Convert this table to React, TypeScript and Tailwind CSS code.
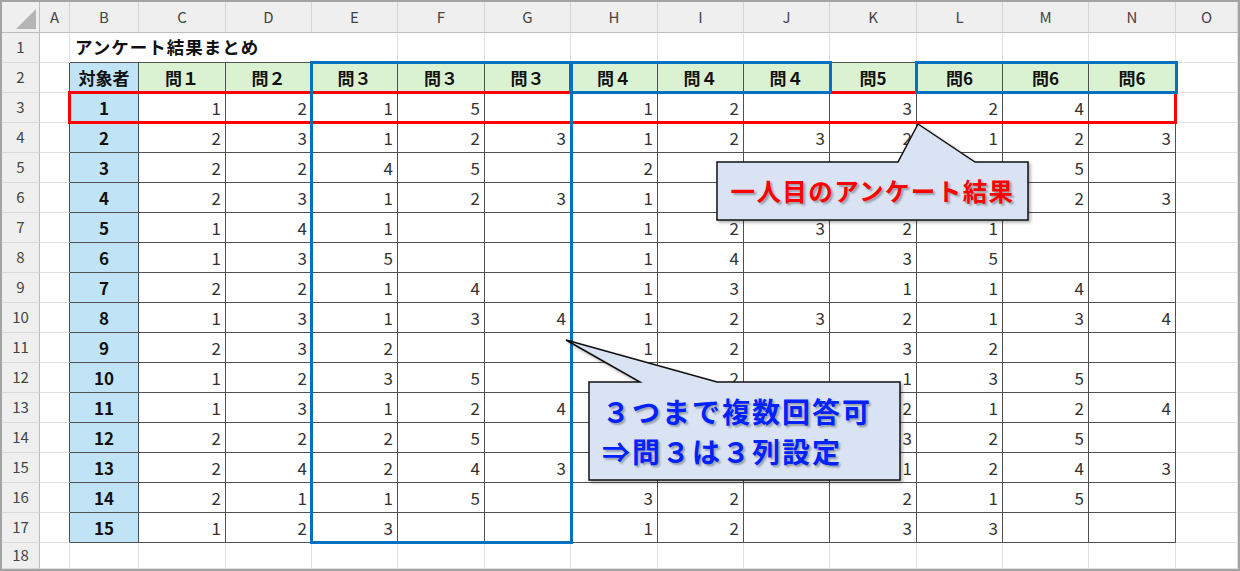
import React from "react";

// ==============================
// Sheet layout
// ==============================
const COLS = ["", "A", "B", "C", "D", "E", "F", "G", "H", "I", "J", "K", "L", "M", "N", "O"];

const HEADERS = ["問１", "問２", "問３", "問３", "問３", "問４", "問４", "問４", "問5", "問6", "問6", "問6"];

// C..N per respondent (null = blank, or hidden under a callout)
const DATA: (number | null)[][] = [
  [1, 2, 1, 5, null, 1, 2, null, 3, 2, 4, null],
  [2, 3, 1, 2, 3, 1, 2, 3, 2, 1, 2, 3],
  [2, 2, 4, 5, null, 2, null, null, null, null, 5, null],
  [2, 3, 1, 2, 3, 1, null, null, null, null, 2, 3],
  [1, 4, 1, null, null, 1, 2, 3, 2, 1, null, null],
  [1, 3, 5, null, null, 1, 4, null, 3, 5, null, null],
  [2, 2, 1, 4, null, 1, 3, null, 1, 1, 4, null],
  [1, 3, 1, 3, 4, 1, 2, 3, 2, 1, 3, 4],
  [2, 3, 2, null, null, 1, 2, null, 3, 2, null, null],
  [1, 2, 3, 5, null, null, 2, null, 1, 3, 5, null],
  [1, 3, 1, 2, 4, null, null, null, 2, 1, 2, 4],
  [2, 2, 2, 5, null, null, null, null, 3, 2, 5, null],
  [2, 4, 2, 4, 3, null, null, null, 1, 2, 4, 3],
  [2, 1, 1, 5, null, 3, 2, null, 2, 1, 5, null],
  [1, 2, 3, null, null, 1, 2, null, 3, 3, null, null],
];

const inTable = (r: number, c: number) => r >= 2 && r <= 17 && c >= 2 && c <= 14;

const font = "font-['Noto_Sans_CJK_JP','Noto_Sans',sans-serif]";

function Cell({ r, c }: { r: number; c: number }) {
  // column header row
  if (r === 0) {
    if (c === 0) {
      return (
        <div className="relative bg-[#efefef] border-r border-b border-[#bdbdbd]">
          <svg className="absolute right-[2px] bottom-[2px]" width="22" height="22" viewBox="0 0 22 22">
            <polygon points="1,21 21,21 21,1" fill="#b5b5b5" />
          </svg>
        </div>
      );
    }
    return (
      <div className="flex items-center justify-center bg-[#efefef] border-r border-[#d4d4d4] border-b-[#bdbdbd] border-b text-[15px] text-[#444]">
        {COLS[c]}
      </div>
    );
  }

  // row header column
  if (c === 0) {
    return (
      <div className="flex items-center justify-center bg-[#efefef] border-r border-r-[#bdbdbd] border-b border-b-[#d9d9d9] text-[15px] text-[#444]">
        {r}
      </div>
    );
  }

  const darkR = inTable(r, c) || inTable(r, c + 1);
  const darkB = inTable(r, c) || inTable(r + 1, c);
  const borders = `border-r border-b ${darkR ? "border-r-[#505050]" : "border-r-[#e1e1e1]"} ${
    darkB ? "border-b-[#505050]" : "border-b-[#e1e1e1]"
  }`;

  // title
  if (r === 1 && c === 2) {
    return (
      <div className="col-span-3 flex items-center pl-[5px] border-b border-b-[#505050] text-[17.5px] font-bold tracking-[1px] text-[#111] whitespace-nowrap">
        アンケート結果まとめ
      </div>
    );
  }
  if (r === 1 && (c === 3 || c === 4)) return null;

  // header row
  if (r === 2 && c >= 2 && c <= 14) {
    return (
      <div
        className={`flex items-center justify-center ${borders} ${
          c === 2 ? "bg-[#c0e4f5]" : "bg-[#dbf2d2]"
        } text-[17px] font-bold text-[#111]`}
      >
        {c === 2 ? "対象者" : HEADERS[c - 3]}
      </div>
    );
  }

  // respondent number
  if (r >= 3 && r <= 17 && c === 2) {
    return (
      <div className={`flex items-center justify-center ${borders} bg-[#c0e4f5] text-[17px] font-bold text-[#111]`}>
        {r - 2}
      </div>
    );
  }

  // answers
  if (r >= 3 && r <= 17 && c >= 3 && c <= 14) {
    const v = DATA[r - 3][c - 3];
    return (
      <div className={`flex items-center justify-end pr-[4px] ${borders} bg-white text-[17px] text-[#333]`}>
        {v ?? ""}
      </div>
    );
  }

  return <div className={`${borders} bg-white`} />;
}

// ==============================
// Callouts (shape + text)
// ==============================
function Callouts() {
  return (
    <>
      <svg className="absolute left-0 top-0 pointer-events-none" width="1236" height="567">
        <defs>
          <filter id="sh" x="-10%" y="-10%" width="130%" height="140%">
            <feDropShadow dx="2" dy="2" stdDeviation="1.5" floodColor="#000" floodOpacity="0.3" />
          </filter>
        </defs>
        <path
          d="M715,160 L896,160 L916,122 L973,160 L1026,160 L1026,218 L715,218 Z"
          fill="#dae3f3"
          stroke="#111"
          strokeWidth="1.5"
          filter="url(#sh)"
        />
        <path
          d="M587,380 L638,380 L564,338 L715,380 L898,380 L898,478 L587,478 Z"
          fill="#dae3f3"
          stroke="#111"
          strokeWidth="1.5"
          filter="url(#sh)"
        />
      </svg>

      <div className="absolute left-[715px] top-[160px] w-[311px] h-[58px] flex items-center justify-center">
        <span className="text-[24.5px] font-bold tracking-[1.4px] text-[#ff0000] [text-shadow:2px_2px_2px_rgba(0,0,0,0.3)] whitespace-nowrap">
          一人目のアンケート結果
        </span>
      </div>

      <div className="absolute left-[587px] top-[380px] w-[311px] h-[98px] flex flex-col justify-center pl-[13px] leading-[40px] text-[28px] font-bold tracking-[2px] text-[#0022ff] [text-shadow:2px_2px_2px_rgba(0,0,0,0.3)] whitespace-nowrap">
        <span>３つまで複数回答可</span>
        <span>⇒問３は３列設定</span>
      </div>
    </>
  );
}

export default function App() {
  const rows = Array.from({ length: 19 }, (_, r) => r);
  const cols = Array.from({ length: 16 }, (_, c) => c);

  return (
    <div className={`w-[1240px] h-[571px] border-2 border-[#a3a3a3] bg-white overflow-hidden ${font}`}>
      <div className="relative w-[1236px] h-[567px]">
        <div className="grid grid-cols-[38px_30px_69px_87px_86px_86px_87px_86px_87px_86px_86px_87px_86px_86px_87px_1fr] grid-rows-[31px_repeat(17,30px)_1fr] h-full">
          {rows.map((r) => cols.map((c) => <Cell key={`${r}-${c}`} r={r} c={c} />))}
        </div>

        {/* red: first respondent row */}
        <div className="absolute left-[66px] top-[89px] w-[1109px] h-[33px] border-[3px] border-[#ff0000]" />

        {/* blue: multi-answer groups */}
        <div className="absolute left-[308px] top-[59px] w-[263px] h-[483px] border-[3px] border-[#0070c0]" />
        <div className="absolute left-[567px] top-[59px] w-[263px] h-[33px] border-[3px] border-[#0070c0]" />
        <div className="absolute left-[913px] top-[59px] w-[263px] h-[33px] border-[3px] border-[#0070c0]" />

        <Callouts />
      </div>
    </div>
  );
}
